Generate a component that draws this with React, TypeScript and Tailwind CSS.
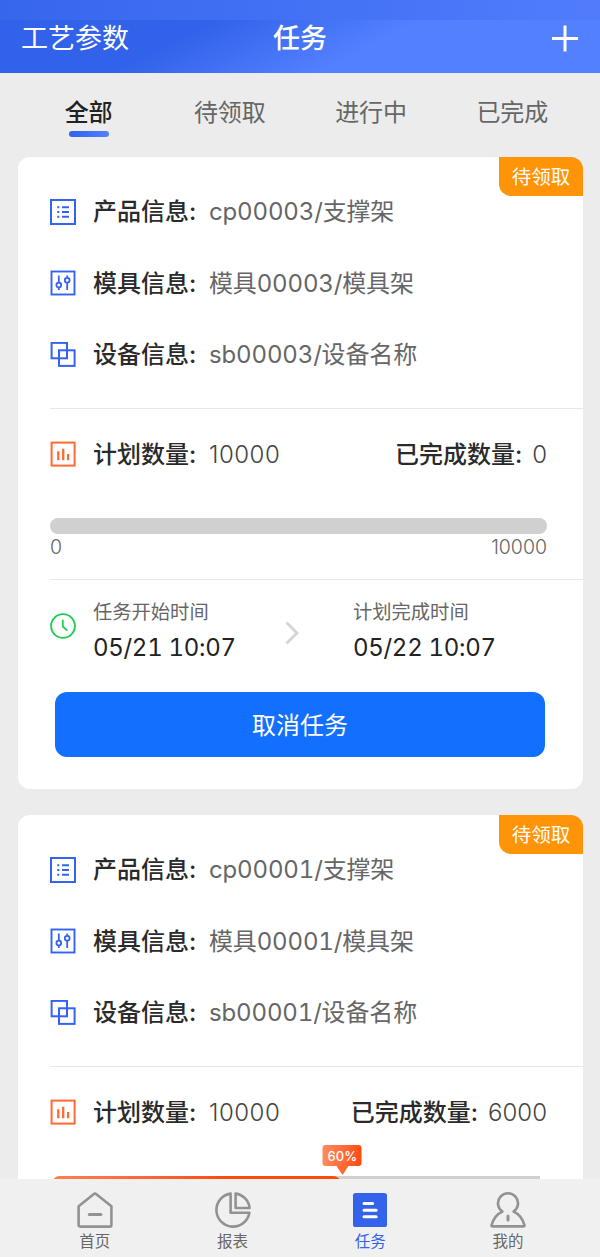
import React from "react"

type IconProps = { className?: string }

// 任务卡片图标
const ListIcon = ({ className }: IconProps) => (
	<svg viewBox="0 0 26 26" className={className} fill="none" stroke="#3363f0">
		<rect x="1" y="1" width="24" height="24" strokeWidth="2" />
		<path d="M7.3 8.3h2M7.3 13h2M7.3 17.7h2M12 8.3h7M12 13h7M12 17.7h7" strokeWidth="1.9" />
	</svg>
)

const SlidersIcon = ({ className }: IconProps) => (
	<svg viewBox="0 0 26 26" className={className} fill="none" stroke="#3363f0">
		<rect x="1.5" y="1.5" width="23" height="23" strokeWidth="1.9" />
		<path d="M8.8 5.5v7M8.8 17.3v2.7M17.2 5.5v2.2M17.2 12.8v7.2" strokeWidth="1.8" />
		<circle cx="8.8" cy="15" r="2.4" strokeWidth="1.8" />
		<circle cx="17.2" cy="10.2" r="2.4" strokeWidth="1.8" />
	</svg>
)

const DeviceIcon = ({ className }: IconProps) => (
	<svg viewBox="0 0 26 26" className={className} fill="none" stroke="#3363f0" strokeWidth="2">
		<rect x="1.6" y="0.9" width="15.4" height="15.4" />
		<rect x="9" y="8.3" width="15.6" height="15.6" />
	</svg>
)

const ChartIcon = ({ className }: IconProps) => (
	<svg viewBox="0 0 26 26" className={className} fill="none" stroke="#ff6a33">
		<rect x="1.6" y="1.6" width="23" height="23" strokeWidth="2" />
		<path d="M8.3 10.3v9M13.2 7.8v11.5M18.1 13v6.3" strokeWidth="2.3" />
	</svg>
)

const ClockIcon = ({ className }: IconProps) => (
	<svg viewBox="0 0 26 26" className={className} fill="none" stroke="#22cc55">
		<circle cx="13" cy="13" r="11.9" strokeWidth="1.9" />
		<path d="M12.8 6.7v6.8l4.6 4.2" strokeWidth="1.8" />
	</svg>
)

// 底部导航图标
const HomeIcon = ({ className }: IconProps) => (
	<svg viewBox="0 0 36 36" className={className} fill="none" stroke="#929292" strokeWidth="2.6" strokeLinejoin="round">
		<path d="M1.6 14.2 16.6 2.2q1.4-1 2.8 0L34.4 14.2V33q0 1.6-1.6 1.6H3.2q-1.6 0-1.6-1.6z" />
		<path d="M12.3 22.6h11.6" strokeWidth="3" strokeLinecap="round" />
	</svg>
)

const PieIcon = ({ className }: IconProps) => (
	<svg viewBox="0 0 36 36" className={className} fill="none" stroke="#929292" strokeWidth="2.6" strokeLinejoin="round">
		<path d="M15.6 1.6A16.6 16.6 0 1 0 34.4 20.8H15.6z" />
		<path d="M20.6 1.6V16h14A16 16 0 0 0 20.6 1.6z" />
	</svg>
)

const TaskIcon = ({ className }: IconProps) => (
	<svg viewBox="0 0 36 36" className={className} fill="none">
		<rect x="1" y="1" width="34" height="34" rx="2.6" fill="#3363ea" />
		<path d="M12 11.6h8.6M12 18.2h12.2M12 24.8h12.2" stroke="#fff" strokeWidth="3" strokeLinecap="round" />
	</svg>
)

const UserIcon = ({ className }: IconProps) => (
	<svg viewBox="0 0 36 36" className={className} fill="none" stroke="#929292" strokeWidth="2.6" strokeLinejoin="round">
		<path d="M12.4 19.6a10 10 0 1 1 11.2 0q8 3.4 10.8 13.4.4 1.4-1.2 1.4H2.8q-1.6 0-1.2-1.4 2.8-10 10.8-13.4z" />
		<path d="M18 24v4" strokeWidth="3" strokeLinecap="round" />
	</svg>
)

const tabs = ["全部", "待领取", "进行中", "已完成"]

const navItems = [
	{ label: "首页", icon: HomeIcon },
	{ label: "报表", icon: PieIcon },
	{ label: "任务", icon: TaskIcon },
	{ label: "我的", icon: UserIcon },
]

type Task = {
	status: string
	product: string
	mold: string
	device: string
	planned: number
	done: number
	schedule?: { start: string; end: string }
}

const tasks: Task[] = [
	{
		status: "待领取",
		product: "cp00003/支撑架",
		mold: "模具00003/模具架",
		device: "sb00003/设备名称",
		planned: 10000,
		done: 0,
		schedule: { start: "05/21 10:07", end: "05/22 10:07" },
	},
	{
		status: "待领取",
		product: "cp00001/支撑架",
		mold: "模具00001/模具架",
		device: "sb00001/设备名称",
		planned: 10000,
		done: 6000,
	},
]

const Label = ({ children }: { children: React.ReactNode }) => (
	<span className="font-medium text-[#2a2a2a]">{children}</span>
)

const InfoRow = ({
	icon: Icon,
	label,
	value,
}: {
	icon: React.ComponentType<IconProps>
	label: string
	value: string
}) => (
	<div className="flex h-[71.5px] items-center">
		<Icon className="mr-[17px] size-[26px]" />
		<div className="w-[116px] pt-px">
			<Label>{label}</Label>
		</div>
		<span className="pt-px tracking-[-0.15px] tabular-nums">{value}</span>
	</div>
)

const Progress = ({ task }: { task: Task }) => {
	const percent = (task.done / task.planned) * 100
	if (percent === 0) {
		return <div className="mt-[18px] mr-9 h-4 rounded-full bg-[#d0d0d0]" />
	}
	return (
		<div className="relative mt-[18px] mr-[43px] ml-0.5 h-4 rounded-l-full bg-[#d0d0d0]">
			<div
				className="h-4 rounded-full bg-linear-to-r from-[#ff8050] to-[#ff4a0a] to-60%"
				style={{ width: `${percent - 0.8}%` }}
			/>
			<div
				className="absolute -top-[31px] flex -translate-x-1/2 flex-col items-center"
				style={{ left: `${percent - 0.5}%` }}
			>
				<div className="h-[21px] w-[39px] rounded-[3px] bg-linear-to-r from-[#ff8a5c] to-[#ff4a05] text-center text-[13px] leading-[22px] font-medium text-white">
					{percent}%
				</div>
				<svg viewBox="0 0 12 9" className="h-[9px] w-3" fill="#ff6a30">
					<path d="M0 0h12L6 9z" />
				</svg>
			</div>
		</div>
	)
}

const TimeBlock = ({ label, time }: { label: string; time: string }) => (
	<div className="w-[192px]">
		<div className="text-[19.3px] leading-7">{label}</div>
		<div className="mt-1.5 tracking-[-0.3px] text-[#222] tabular-nums">{time}</div>
	</div>
)

const TaskCard = ({ task }: { task: Task }) => (
	<div className="relative h-[632px] shrink-0 rounded-xl bg-white pt-[19px] pl-8 text-[24px] leading-8 text-[#666]">
		<div className="absolute top-0 right-0 h-[39px] w-[84px] rounded-tr-xl rounded-bl-xl bg-[#ff9408] text-center text-[19.5px] leading-10 text-white">
			{task.status}
		</div>
		<InfoRow icon={ListIcon} label="产品信息:" value={task.product} />
		<InfoRow icon={SlidersIcon} label="模具信息:" value={task.mold} />
		<InfoRow icon={DeviceIcon} label="设备信息:" value={task.device} />
		<div className="mt-[17px] h-px bg-[#e8e8e8]" />
		<div className="flex h-[91px] items-center pr-9">
			<ChartIcon className="mr-[17px] size-[26px]" />
			<div className="w-[116px] pt-px">
				<Label>计划数量:</Label>
			</div>
			<span className="pt-px font-light tracking-[0.5px] text-[#444]">{task.planned}</span>
			<div className="ml-auto flex gap-2.5 pt-px">
				<Label>已完成数量:</Label>
				<span className="font-light text-[#444]">{task.done}</span>
			</div>
		</div>
		<Progress task={task} />
		{task.schedule && (
			<>
				<div className="mt-px flex justify-between pr-9 text-[19.5px] leading-6 font-light">
					<span>0</span>
					<span>{task.planned}</span>
				</div>
				<div className="mt-5 h-px bg-[#e8e8e8]" />
				<div className="flex h-28 pt-[18px]">
					<ClockIcon className="mt-[15px] mr-[17px] size-[26px]" />
					<TimeBlock label="任务开始时间" time={task.schedule.start} />
					<svg viewBox="0 0 14 24" className="mt-[23px] mr-[54px] h-6 w-3.5" fill="none" stroke="#d6d6d6" strokeWidth="3">
						<path d="M1.5 1.5 12 12 1.5 22.5" />
					</svg>
					<TimeBlock label="计划完成时间" time={task.schedule.end} />
				</div>
				<button className="ml-[5px] h-[65px] w-[490px] rounded-xl bg-[#1370ff] pt-1 text-white">
					取消任务
				</button>
			</>
		)}
	</div>
)

export default function App() {
	return (
		<div className="flex h-[1257px] w-[600px] flex-col overflow-hidden bg-[#ececec] font-[Inter,'Noto_Sans_CJK_SC',sans-serif]">
			<header className="h-[73px] shrink-0 bg-linear-[153deg,#3262ea_34%,#5380ff_62%]">
				<div className="h-5 bg-linear-to-r from-[#3766ee] to-[#507cfc]" />
				<div className="grid h-9 grid-cols-3 items-center px-[21px] text-[27px] leading-9 text-white">
					<span className="pt-px">工艺参数</span>
					<span className="pt-px text-center font-medium">任务</span>
					<svg viewBox="0 0 28 28" className="size-7 justify-self-end" stroke="#fff" strokeWidth="3">
						<path d="M1 13.5h26M14 .5v26" />
					</svg>
				</div>
			</header>

			<nav className="grid h-[84px] shrink-0 grid-cols-4 pt-[22px] pr-[17px] pl-[18px] text-center text-[24px] leading-9 text-[#666]">
				{tabs.map((tab, i) =>
					i === 0 ? (
						<div key={tab} className="font-medium text-[#222]">
							{tab}
							<div className="mx-auto h-1.5 w-10 rounded-full bg-linear-to-r from-[#3160ea] to-[#5380ff]" />
						</div>
					) : (
						<div key={tab}>{tab}</div>
					),
				)}
			</nav>

			<main className="flex min-h-0 flex-1 flex-col gap-[26px] overflow-hidden pr-[17px] pl-[18px]">
				{tasks.map((task) => (
					<TaskCard key={task.product} task={task} />
				))}
			</main>

			<footer className="grid h-[78px] shrink-0 grid-cols-4 bg-[#f0f0f0] pt-[13px] pr-[23px] pl-[26px]">
				{navItems.map(({ label, icon: Icon }) => (
					<div key={label} className="flex flex-col items-center">
						<Icon className="size-9" />
						<span
							className={
								label === "任务"
									? "mt-0.5 text-[15.5px] leading-6 text-[#3363ea]"
									: "mt-0.5 text-[15.5px] leading-6 text-[#666]"
							}
						>
							{label}
						</span>
					</div>
				))}
			</footer>
		</div>
	)
}
